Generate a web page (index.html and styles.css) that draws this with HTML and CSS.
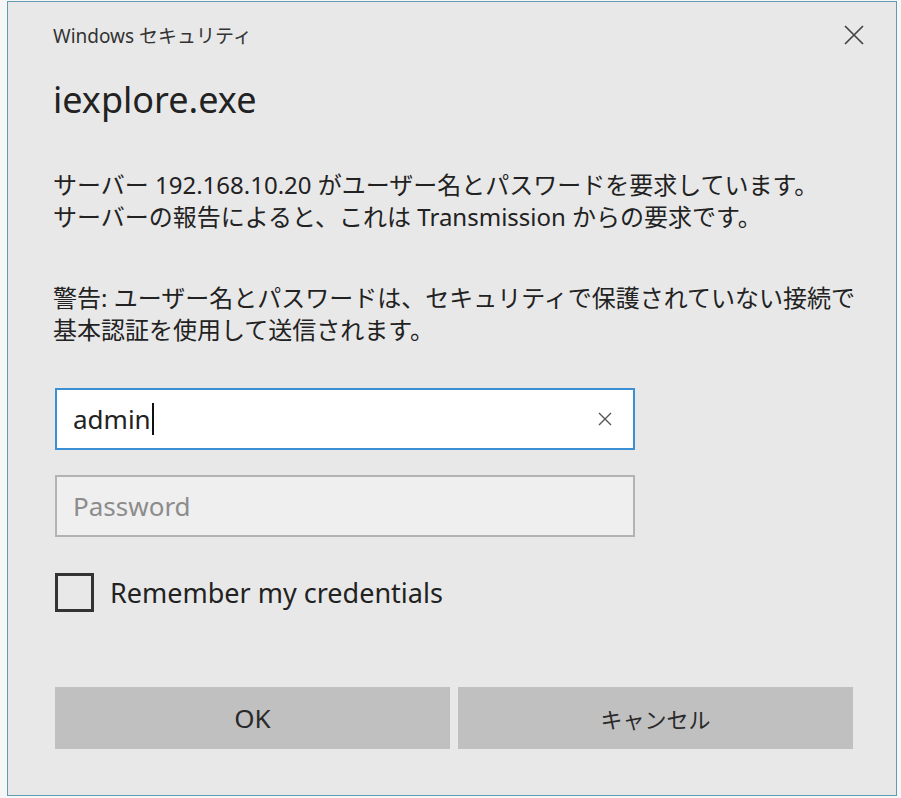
FILE: index.html
```html
<!DOCTYPE html>
<html lang="ja">

<head>
    <meta charset="UTF-8" />
    <title>Windows セキュリティ</title>
    <link rel="stylesheet" href="styles.css">
</head>

<body>

    <div class="dialog">
        <!-- Barra de título -->
        <div class="dialog-header">
            <span class="dialog-title">Windows セキュリティ</span>
            <button class="close-btn" aria-label="閉じる">
                <svg width="22" height="22" viewBox="0 0 22 22">
                    <path d="M2 2 L20 20 M20 2 L2 20" stroke="#444" stroke-width="1.7" fill="none" />
                </svg>
            </button>
        </div>

        <div class="app-name">iexplore.exe</div>

        <p class="message">サーバー 192.168.10.20 がユーザー名とパスワードを要求しています。<br>サーバーの報告によると、これは Transmission からの要求です。</p>

        <p class="message">警告: ユーザー名とパスワードは、セキュリティで保護されていない接続で<br>基本認証を使用して送信されます。</p>

        <!-- Campos -->
        <div class="field field-active">
            <span class="field-value">admin</span><span class="caret"></span>
            <svg class="field-clear" width="16" height="16" viewBox="0 0 16 16">
                <path d="M2 2 L14 14 M14 2 L2 14" stroke="#555" stroke-width="1.4" fill="none" />
            </svg>
        </div>

        <div class="field field-empty">
            <span class="placeholder">Password</span>
        </div>

        <label class="remember">
            <span class="checkbox"></span>
            Remember my credentials
        </label>

        <div class="buttons">
            <button class="btn">OK</button>
            <button class="btn btn-jp">キャンセル</button>
        </div>
    </div>

</body>

</html>
```

FILE: styles.css
```css
body {
    margin: 0;
    background: #f6f6f6;
    font-family: "Noto Sans", "Noto Sans CJK JP", sans-serif;
    color: #1e1e1e;
}

.dialog {
    box-sizing: border-box;
    width: 890px;
    height: 795px;
    margin: 1px 0 0 7px;
    padding: 0 45px;
    border: 1px solid #5f9cb4;
    background: #e8e8e8;
    display: flex;
    flex-direction: column;
}

/* Cabeçalho */
.dialog-header {
    height: 66px;
    display: flex;
    align-items: center;
    justify-content: space-between;
}

.dialog-title {
    font-size: 19px;
    color: #333;
}

.close-btn {
    border: none;
    background: none;
    padding: 0;
    margin-right: -16px;
    width: 26px;
    height: 26px;
    display: flex;
    align-items: center;
    justify-content: center;
}

.app-name {
    margin-top: 10px;
    font-size: 36px;
    line-height: 44px;
    color: #222;
}

/* Texto da mensagem */
.message {
    margin: 47px 0 0;
    font-size: 24px;
    line-height: 32px;
    color: #222;
    white-space: nowrap;
}

.message + .message {
    margin-top: 49px;
}

/* Campos de entrada */
.field {
    box-sizing: border-box;
    width: 580px;
    height: 62px;
    margin-left: 2px;
    padding: 0 16px;
    display: flex;
    align-items: center;
    font-size: 26px;
}

.field-active {
    margin-top: 42px;
    background: #fff;
    border: 2px solid #3c8fd2;
    color: #222;
}

.field-empty {
    margin-top: 25px;
    background: #efefef;
    border: 2px solid #b3b3b3;
}

.caret {
    width: 2px;
    height: 32px;
    background: #111;
    margin-left: 1px;
}

.field-clear {
    margin-left: auto;
    margin-right: 4px;
}

.placeholder {
    color: #8c8c8c;
}

/* Checkbox */
.remember {
    margin-top: 36px;
    margin-left: 2px;
    display: flex;
    align-items: center;
    gap: 16px;
    font-size: 27px;
    color: #222;
}

.checkbox {
    box-sizing: border-box;
    width: 39px;
    height: 39px;
    border: 3px solid #333;
}

/* Botões */
.buttons {
    margin-top: 75px;
    margin-left: 2px;
    display: grid;
    grid-template-columns: 395px 395px;
    gap: 8px;
}

.btn {
    height: 62px;
    border: none;
    background: #c0c0c0;
    font-family: "Noto Sans", "Noto Sans CJK JP", sans-serif;
    font-size: 26px;
    color: #2a2a2a;
}

.btn-jp {
    font-size: 22px;
}
```
